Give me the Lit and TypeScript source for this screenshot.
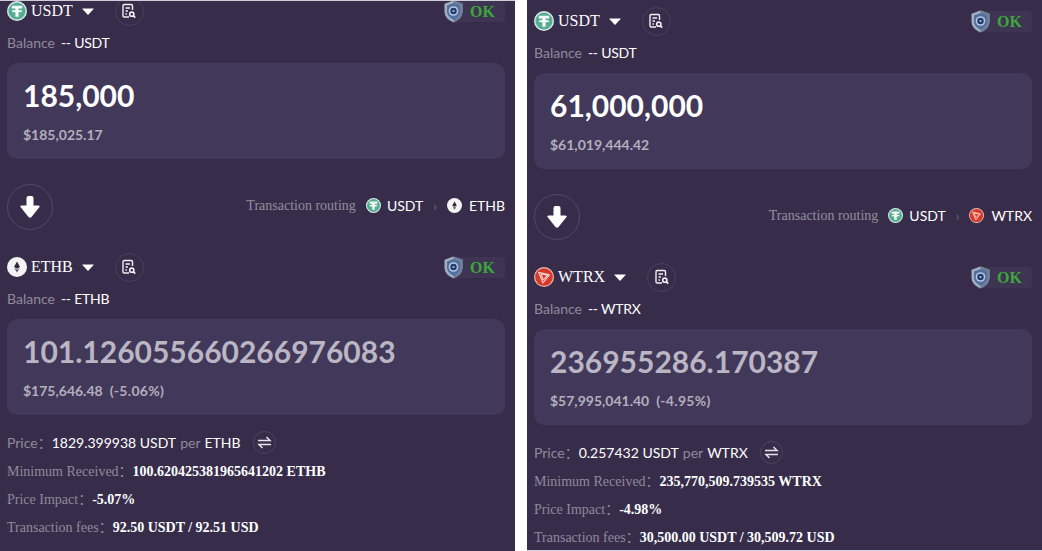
import { LitElement, html, css, svg } from 'lit';
import { customElement } from 'lit/decorators.js';

type Token = 'USDT' | 'ETHB' | 'WTRX';

interface Swap {
  offset: number;
  edge: string;
  to: Token;
  fromAmount: string;
  fromUsd: string;
  toAmount: string;
  toUsd: string;
  toDiff: string;
  price: string;
  minReceived: string;
  impact: string;
  fees: string;
}

const swaps: Swap[] = [
  {
    offset: -11,
    edge: 'top',
    to: 'ETHB',
    fromAmount: '185,000',
    fromUsd: '$185,025.17',
    toAmount: '101.126055660266976083',
    toUsd: '$175,646.48',
    toDiff: '(-5.06%)',
    price: '1829.399938',
    minReceived: '100.620425381965641202 ETHB',
    impact: '-5.07%',
    fees: '92.50 USDT / 92.51 USD',
  },
  {
    offset: 0,
    edge: 'bottom',
    to: 'WTRX',
    fromAmount: '61,000,000',
    fromUsd: '$61,019,444.42',
    toAmount: '236955286.170387',
    toUsd: '$57,995,041.40',
    toDiff: '(-4.95%)',
    price: '0.257432',
    minReceived: '235,770,509.739535 WTRX',
    impact: '-4.98%',
    fees: '30,500.00 USDT / 30,509.72 USD',
  },
];

function tokenIcon(t: Token, size: number) {
  if (t === 'USDT') {
    return html`<svg width=${size} height=${size} viewBox="0 0 20 20">
      <circle cx="10" cy="10" r="10" fill="#dfeae6"/>
      <circle cx="10" cy="10" r="8.6" fill="#55ae94"/>
      <path d="M4.800 4.800h10.400v2.800h-3.600v1.500c2 .1 3.600.5 3.600 1.100s-1.600 1-3.600 1.100v4.500H8.400v-4.500c-2-.1-3.600-.5-3.600-1.100s1.600-1 3.600-1.100V7.600H4.800z" fill="#f4f8f6"/>
    </svg>`;
  }
  if (t === 'ETHB') {
    return html`<svg width=${size} height=${size} viewBox="0 0 20 20">
      <circle cx="10" cy="10" r="10" fill="#f4f3f4"/>
      <path d="M10 4.500 7 10 10 11.800 13 10z" fill="#2c2a33"/>
      <path d="M10 12.700 7.300 11 10 15.500 12.700 11z" fill="#55525c"/>
    </svg>`;
  }
  return html`<svg width=${size} height=${size} viewBox="0 0 20 20">
    <circle cx="10" cy="10" r="10" fill="#eeb9ae"/>
    <circle cx="10" cy="10" r="8.800" fill="#d5392c"/>
    <path d="M4.600 5.200 15.400 7.800 9 16z M6.800 6.800 9.300 13M6.800 6.800l6.800 1.400-4.300 4.800" fill="none" stroke="#f7d5cf" stroke-width="1.100" stroke-linejoin="round"/>
  </svg>`;
}

const caret = html`<svg class="caret" width="12" height="7" viewBox="0 0 12 7"><path d="M.6.400h10.800q.5 0 .2.500L6.500 6.400q-.5.500-1 0L.4.900Q.100.400.6.400z" fill="#fff"/></svg>`;

const searchDoc = html`<svg width="18" height="18" viewBox="0 0 18 18" fill="none" stroke="#f1f0f3" stroke-width="1.400">
  <path d="M9 15H4.200Q3 15 3 13.800V3.700Q3 2.500 4.200 2.500h7.100q1.200 0 1.200 1.200V8"/>
  <path d="M5.500 6h4.500M5.500 9h2.500M5.500 12h1.500"/>
  <circle cx="11.800" cy="12.200" r="2.100" stroke-width="1.600"/>
  <path d="M13.400 13.800 15.200 15.600" stroke-width="1.800"/>
</svg>`;

const shield = svg`
  <path d="M9.500 .5 18.500 3.800v8Q18.500 18.500 9.500 22.500.5 18.500.5 11.800v-8z" fill="#a3aebf"/>
  <path d="M9.500 .5V22.500Q18.500 18.500 18.500 11.800v-8z" fill="#6f7f99"/>
  <path d="M9.500 3 16 5.400v6.200Q16 16.600 9.500 19.800 3 16.600 3 11.600V5.400z" fill="#52709f"/>
  <circle cx="9.500" cy="11" r="4.800" fill="#b6c7de"/>
  <circle cx="9.500" cy="11" r="3.200" fill="#1d3769"/>
  <circle cx="9.500" cy="11" r="1.200" fill="#8fa8cc"/>`;

@customElement('swap-panel')
class SwapPanel extends LitElement {
  static properties = { swap: { attribute: false } };
  swap!: Swap;

  static styles = css`
    :host {
      display: block;
      width: 515px;
      height: 551px;
      box-sizing: border-box;
      padding: 0 10px 0 7px;
      background: #372d4a;
      overflow: hidden;
      font-family: Lato, sans-serif;
      color: #fff;
    }
    :host(.top) {
      border-top: 1px solid #cfcdd6;
    }
    :host(.bottom) {
      border-bottom: 1px solid #d8d6dc;
    }
    .head {
      display: flex;
      align-items: center;
      height: 42px;
    }
    .sym {
      font: 16px/20px "Liberation Serif", serif;
      margin-left: 4px;
    }
    .caret {
      margin-left: 9px;
    }
    .doc {
      width: 27px;
      height: 27px;
      margin-left: 21px;
      border: 1px solid #4a4160;
      border-radius: 50%;
      display: flex;
      align-items: center;
      justify-content: center;
    }
    .ok {
      margin-left: auto;
      position: relative;
      width: 58px;
      height: 21px;
      background: #3e3552;
      border-radius: 4px;
      font: bold 16px/21px "Liberation Serif", serif;
      color: #3ea63c;
      text-align: right;
      padding-right: 10px;
      box-sizing: border-box;
    }
    .ok svg {
      position: absolute;
      left: -3px;
      top: -1px;
    }
    .balance {
      font-size: 14px;
      line-height: 22px;
      color: #8f8a9c;
      margin-bottom: 9px;
    }
    .balance b {
      font-weight: 400;
      color: #fff;
      margin-left: 6px;
      letter-spacing: -0.25px;
    }
    .card {
      height: 96px;
      box-sizing: border-box;
      padding: 12px 16px;
      background: #42385a;
      border-radius: 10px;
    }
    .amount {
      font-size: 30px;
      line-height: 40px;
      font-weight: 700;
    }
    .amount.out {
      color: #bab6c4;
    }
    .usd {
      margin-top: 11px;
      font-size: 14px;
      line-height: 18px;
      font-weight: 700;
      color: #b3afbd;
    }
    .usd span {
      margin-left: 7px;
      letter-spacing: 0.3px;
    }
    .mid {
      display: flex;
      align-items: center;
      justify-content: space-between;
      height: 46px;
      margin: 25px 0 16px;
    }
    .down {
      width: 46px;
      height: 46px;
      box-sizing: border-box;
      border: 1px solid #524a68;
      border-radius: 50%;
      display: flex;
      align-items: center;
      justify-content: center;
    }
    .route {
      display: flex;
      align-items: center;
      font-size: 14px;
      margin-top: -3px;
    }
    .route .lbl {
      font: 14px "Liberation Serif", serif;
      color: #938e9f;
      margin-right: 10px;
    }
    .route .tk {
      margin-left: 6px;
    }
    .route .tk:last-child {
      margin-left: 7px;
    }
    .route .sep {
      color: #6e677e;
      font-size: 13px;
      margin: 0 10px;
    }
    .price {
      display: flex;
      align-items: center;
      height: 28px;
      margin: 13px 0 2px;
      font-size: 14px;
      font-family: Lato, "Noto Sans CJK SC", sans-serif;
    }
    .price .k {
      color: #8f8a9c;
    }
    .price .dim {
      color: #8f8a9c;
      margin: 0 4px;
    }
    .swap {
      width: 21px;
      height: 21px;
      margin-left: 12px;
      border: 1px solid #4d4563;
      border-radius: 50%;
      display: flex;
      align-items: center;
      justify-content: center;
    }
    .row {
      font: 14px/28px "Liberation Serif", "Noto Sans CJK SC", serif;
      color: #8f8a9c;
      white-space: pre;
    }
    .row b {
      color: #fff;
      font-weight: 700;
    }
  `;

  connectedCallback() {
    super.connectedCallback();
    this.classList.add(this.swap.edge);
  }

  render() {
    const s = this.swap;
    return html`
      <div style="margin-top:${s.offset}px" lang="zh-CN">
        ${this.head('USDT')}
        <div class="balance">Balance<b>-- USDT</b></div>
        <div class="card">
          <div class="amount">${s.fromAmount}</div>
          <div class="usd">${s.fromUsd}</div>
        </div>
        <div class="mid">
          <div class="down">
            <svg width="24" height="24" viewBox="0 0 24 24"><path d="M8.500 3Q8.500 1 10.500 1h3q2 0 2 2v7.500h4.600q2.600 0 1 2l-7.600 9.500q-1.500 1.600-3 0L2.900 12.500q-1.600-2 1-2h4.600z" fill="#fff"/></svg>
          </div>
          <div class="route">
            <span class="lbl">Transaction routing</span>
            ${tokenIcon('USDT', 15)}<span class="tk">USDT</span>
            <span class="sep">›</span>
            ${tokenIcon(s.to, 15)}<span class="tk">${s.to}</span>
          </div>
        </div>
        ${this.head(s.to)}
        <div class="balance">Balance<b>-- ${s.to}</b></div>
        <div class="card">
          <div class="amount out">${s.toAmount}</div>
          <div class="usd">${s.toUsd}<span>${s.toDiff}</span></div>
        </div>
        <div class="price">
          <span class="k">Price：</span>${s.price} USDT<span class="dim">per</span>${s.to}
          <span class="swap"><svg width="15" height="13" viewBox="0 0 15 13" fill="none" stroke="#e6e4ea" stroke-width="1.500"><path d="M1 4.500h12L9.500 1M14 8.500H2l3.500 3.500"/></svg></span>
        </div>
        <div class="row">Minimum Received：<b>${s.minReceived}</b></div>
        <div class="row">Price Impact：<b>${s.impact}</b></div>
        <div class="row">Transaction fees：<b>${s.fees}</b></div>
      </div>
    `;
  }

  private head(t: Token) {
    return html`<div class="head">
      ${tokenIcon(t, 20)}
      <span class="sym">${t}</span>
      ${caret}
      <span class="doc">${searchDoc}</span>
      <span class="ok"><svg width="19" height="23" viewBox="0 0 19 23">${shield}</svg>OK</span>
    </div>`;
  }
}

@customElement('app-root')
class AppRoot extends LitElement {
  static styles = css`
    :host {
      display: flex;
      justify-content: space-between;
      width: 1042px;
      height: 551px;
      background: #fff;
      overflow: hidden;
    }
  `;

  render() {
    return html`${swaps.map(s => html`<swap-panel .swap=${s}></swap-panel>`)}`;
  }
}
